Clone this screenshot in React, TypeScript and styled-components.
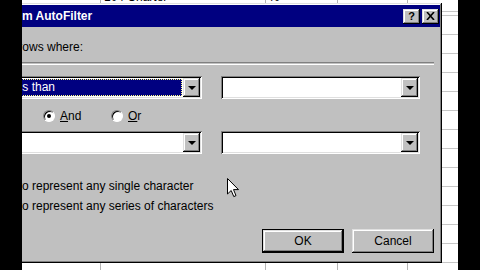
import React from 'react';
import styled, { createGlobalStyle } from 'styled-components';

const GlobalStyle = createGlobalStyle`
  html, body {
    margin: 0;
    padding: 0;
    background: #000;
  }
  body {
    font-family: "Liberation Sans", Arial, sans-serif;
  }
`;

const raised = `inset -1px -1px #000, inset 1px 1px #dfdfdf, inset -2px -2px #808080, inset 2px 2px #fff`;
const sunken = `inset 1px 1px #808080, inset -1px -1px #fff, inset 2px 2px #000, inset -2px -2px #dfdfdf`;

const Screen = styled.div`
    width: 480px;
    height: 270px;
    display: flex;
    background: #000;
    overflow: hidden;
`;

const Blackout = styled.div`
    flex: none;
    width: 22px;
    background: #000;
`;

const Viewport = styled.div`
    position: relative;
    flex: none;
    width: 436px;
    height: 270px;
    overflow: hidden;
    background: #fff;
`;

const Sheet = styled.div`
    display: flex;
    height: 100%;
`;

const Column = styled.div<{ $w?: number; $line?: boolean }>`
    flex: ${p => p.$w ? 'none' : '1'};
    width: ${p => p.$w ? `${p.$w}px` : 'auto'};
    height: 100%;
    box-sizing: border-box;
    border-right: ${p => p.$line ? '1px solid #b4b4b4' : 'none'};
    background-image: repeating-linear-gradient(to bottom, #c6c6c6 0 1px, transparent 1px 19px);
    background-position: 0 15px;
`;

const CellText = styled.div<{ $pad?: number }>`
    margin-top: -10px;
    padding-left: ${p => p.$pad ?? 3}px;
    height: 14px;
    line-height: 14px;
    font-size: 12px;
    color: #000;
    white-space: nowrap;
`;

const Dialog = styled.div`
    position: absolute;
    left: -60px;
    top: 3px;
    width: 480px;
    height: 260px;
    box-sizing: border-box;
    padding: 2px 2px 2px 2px;
    background: #c0c0c0;
    box-shadow: ${raised};
    display: flex;
    flex-direction: column;
    font-size: 12px;
    color: #000;
`;

const TitleBar = styled.div`
    height: 22px;
    flex: none;
    display: flex;
    align-items: center;
    padding: 0 1px 0 24px;
    background: #000080;
    color: #fff;
    font-weight: bold;
    font-size: 12px;
`;

const TitleText = styled.span`
    flex: 1;
    white-space: nowrap;
`;

const CaptionButton = styled.div`
    width: 17px;
    height: 15px;
    margin-left: 2px;
    box-sizing: border-box;
    background: #c0c0c0;
    box-shadow: ${raised};
    color: #000;
    font-size: 11px;
    font-weight: bold;
    display: flex;
    align-items: center;
    justify-content: center;
`;

const Body = styled.div`
    flex: 1;
    display: flex;
    flex-direction: column;
`;

const Line = styled.div<{ $top: number; $left: number }>`
    margin-top: ${p => p.$top}px;
    margin-left: ${p => p.$left}px;
    height: 14px;
    line-height: 14px;
    white-space: nowrap;
`;

const Separator = styled.div`
    margin: 8px 6px 0 0;
    height: 1px;
    border-top: 1px solid #808080;
    border-bottom: 1px solid #fff;
`;

const ComboRow = styled.div<{ $top: number }>`
    margin-top: ${p => p.$top}px;
    margin-left: 26px;
    display: flex;
    gap: 19px;
`;

const Combo = styled.div<{ $w: number }>`
    width: ${p => p.$w}px;
    height: 23px;
    box-sizing: border-box;
    padding: 2px;
    background: #fff;
    box-shadow: ${sunken};
    display: flex;
`;

const ComboValue = styled.div<{ $selected?: boolean }>`
    flex: 1;
    margin: 1px 1px 1px 1px;
    padding-left: 2px;
    line-height: 17px;
    white-space: nowrap;
    overflow: hidden;
    background: ${p => p.$selected ? '#000080' : '#fff'};
    color: ${p => p.$selected ? '#fff' : '#000'};
    outline: ${p => p.$selected ? '1px dotted #ffff80' : 'none'};
    outline-offset: -1px;
`;

const DropButton = styled.div`
    width: 17px;
    flex: none;
    background: #c0c0c0;
    box-shadow: ${raised};
    display: flex;
    align-items: center;
    justify-content: center;
`;

const Arrow = styled.div`
    width: 0;
    height: 0;
    border-left: 4px solid transparent;
    border-right: 4px solid transparent;
    border-top: 4px solid #000;
`;

const RadioRow = styled.div`
    margin-top: 10px;
    margin-left: 79px;
    height: 14px;
    display: flex;
    align-items: center;
`;

const RadioOption = styled.div<{ $w?: number }>`
    width: ${p => p.$w ? `${p.$w}px` : 'auto'};
    display: flex;
    align-items: center;
    gap: 5px;
`;

const RadioDot = styled.div<{ $checked?: boolean }>`
    width: 12px;
    height: 12px;
    box-sizing: border-box;
    border-radius: 50%;
    border: 1px solid;
    border-color: #808080 #fff #fff #808080;
    background: #fff;
    box-shadow: inset 1px 1px #000;
    display: flex;
    align-items: center;
    justify-content: center;
    &::after {
        content: '';
        width: 4px;
        height: 4px;
        border-radius: 50%;
        background: ${p => p.$checked ? '#000' : 'transparent'};
    }
`;

const ButtonRow = styled.div`
    margin: 16px 6px 0 0;
    display: flex;
    justify-content: flex-end;
    gap: 8px;
`;

const Button = styled.div<{ $default?: boolean }>`
    width: 82px;
    height: 24px;
    box-sizing: border-box;
    background: #c0c0c0;
    border: ${p => p.$default ? '1px solid #000' : 'none'};
    box-shadow: ${raised};
    display: flex;
    align-items: center;
    justify-content: center;
    font-size: 12px;
`;

const Cursor = styled.svg`
    position: absolute;
    left: 205px;
    top: 178px;
`;

export default function App() {
    return (
        <>
            <GlobalStyle />
            <Screen>
                <Blackout />
                <Viewport>
                    <Sheet>
                        <Column $w={79} $line />
                        <Column $w={165} $line>
                            <CellText>104 Charter</CellText>
                        </Column>
                        <Column $w={72} $line>
                            <CellText $pad={1}>40</CellText>
                        </Column>
                        <Column $w={70} $line />
                        <Column />
                    </Sheet>

                    <Dialog>
                        <TitleBar>
                            <TitleText>Custom AutoFilter</TitleText>
                            <CaptionButton>?</CaptionButton>
                            <CaptionButton>
                                <svg width="9" height="8" viewBox="0 0 9 8">
                                    <path d="M1 0 L8 8 M8 0 L1 8" stroke="#000" strokeWidth="1.6" />
                                </svg>
                            </CaptionButton>
                        </TitleBar>
                        <Body>
                            <Line $top={13} $left={21}>Show rows where:</Line>
                            <Separator />
                            <ComboRow $top={11}>
                                <Combo $w={212}>
                                    <ComboValue $selected>is less than</ComboValue>
                                    <DropButton><Arrow /></DropButton>
                                </Combo>
                                <Combo $w={199}>
                                    <ComboValue />
                                    <DropButton><Arrow /></DropButton>
                                </Combo>
                            </ComboRow>
                            <RadioRow>
                                <RadioOption $w={68}>
                                    <RadioDot $checked />
                                    <span><u>A</u>nd</span>
                                </RadioOption>
                                <RadioOption>
                                    <RadioDot />
                                    <span><u>O</u>r</span>
                                </RadioOption>
                            </RadioRow>
                            <ComboRow $top={8}>
                                <Combo $w={212}>
                                    <ComboValue />
                                    <DropButton><Arrow /></DropButton>
                                </Combo>
                                <Combo $w={199}>
                                    <ComboValue />
                                    <DropButton><Arrow /></DropButton>
                                </Combo>
                            </ComboRow>
                            <Line $top={25} $left={20}>Use ? to represent any single character</Line>
                            <Line $top={6} $left={22}>Use * to represent any series of characters</Line>
                            <ButtonRow>
                                <Button $default>OK</Button>
                                <Button>Cancel</Button>
                            </ButtonRow>
                        </Body>
                    </Dialog>

                    <Cursor width="13" height="20" viewBox="0 0 13 20">
                        <path d="M0.5 0.5 L0.5 16 L4.2 12.5 L6.8 18.6 L9 17.6 L6.5 11.6 L11.5 11.6 Z"
                            fill="#fff" stroke="#000" strokeWidth="1" strokeLinejoin="miter" />
                    </Cursor>
                </Viewport>
                <Blackout />
            </Screen>
        </>
    );
}
